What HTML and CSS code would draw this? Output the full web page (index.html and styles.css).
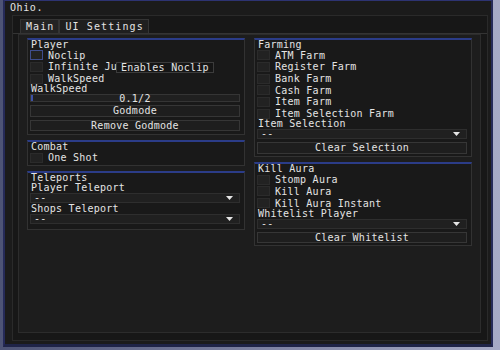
FILE: index.html
```html
<!DOCTYPE html>
<html>
<head>
<meta charset="utf-8">
<link rel="stylesheet" href="styles.css">
</head>
<body>
<div class="window">
  <div class="title">Ohio.</div>
  <div class="frame">
    <div class="tabbar">
      <div class="tab active">Main</div>
      <div class="tab">UI Settings</div>
    </div>
    <div class="content">
      <div class="col">
        <div class="group">
          <div class="hdr">Player</div>
          <div class="check"><span class="box hover"></span>Noclip</div>
          <div class="check"><span class="box"></span>Infinite Jump</div>
          <div class="check"><span class="box"></span>WalkSpeed</div>
          <div class="label">WalkSpeed</div>
          <div class="slider"><span class="grab"></span>0.1/2</div>
          <div class="btn">Godmode</div>
          <div class="btn">Remove Godmode</div>
          <div class="tooltip">Enables Noclip</div>
        </div>
        <div class="group compact">
          <div class="hdr">Combat</div>
          <div class="check"><span class="box"></span>One Shot</div>
        </div>
        <div class="group">
          <div class="hdr">Teleports</div>
          <div class="label">Player Teleport</div>
          <div class="combo"><span>--</span><svg class="arrow" width="7" height="4" viewBox="0 0 7 4"><polygon points="0,0 7,0 3.5,4" fill="#e6e6e6"/></svg></div>
          <div class="label">Shops Teleport</div>
          <div class="combo"><span>--</span><svg class="arrow" width="7" height="4" viewBox="0 0 7 4"><polygon points="0,0 7,0 3.5,4" fill="#e6e6e6"/></svg></div>
        </div>
      </div>
      <div class="col right">
        <div class="group">
          <div class="hdr">Farming</div>
          <div class="check"><span class="box"></span>ATM Farm</div>
          <div class="check"><span class="box"></span>Register Farm</div>
          <div class="check"><span class="box"></span>Bank Farm</div>
          <div class="check"><span class="box"></span>Cash Farm</div>
          <div class="check"><span class="box"></span>Item Farm</div>
          <div class="check"><span class="box"></span>Item Selection Farm</div>
          <div class="label">Item Selection</div>
          <div class="combo"><span>--</span><svg class="arrow" width="7" height="4" viewBox="0 0 7 4"><polygon points="0,0 7,0 3.5,4" fill="#e6e6e6"/></svg></div>
          <div class="btn">Clear Selection</div>
        </div>
        <div class="group">
          <div class="hdr">Kill Aura</div>
          <div class="check"><span class="box"></span>Stomp Aura</div>
          <div class="check"><span class="box"></span>Kill Aura</div>
          <div class="check"><span class="box"></span>Kill Aura Instant</div>
          <div class="label">Whitelist Player</div>
          <div class="combo"><span>--</span><svg class="arrow" width="7" height="4" viewBox="0 0 7 4"><polygon points="0,0 7,0 3.5,4" fill="#e6e6e6"/></svg></div>
          <div class="btn">Clear Whitelist</div>
        </div>
      </div>
    </div>
  </div>
</div>
</body>
</html>
```

FILE: styles.css
```css
* { box-sizing: border-box; }
html, body { margin: 0; padding: 0; }
body {
  width: 500px;
  height: 350px;
  overflow: hidden;
  background: linear-gradient(to right, #4d5375 0%, #7a7f9f 50%, #a6aac6 100%);
  font-family: "DejaVu Sans Mono", "Liberation Mono", monospace;
  font-size: 10px;
  letter-spacing: 0.25px;
  color: #e4e4e4;
}
.window {
  margin-left: 3px;
  width: 490px;
  height: 347px;
  background: #1b1b1b;
  border: 2px solid #252a58;
  border-top: 1px solid #2d3372;
  border-bottom: 3px solid #1f2448;
}
.title {
  height: 14px;
  line-height: 14px;
  padding-left: 5px;
  letter-spacing: 0.6px;
}
.frame {
  margin-left: 7px;
  width: 476px;
  height: 326px;
  border: 1px solid #2a2a2a;
  background: #171717;
}
.tabbar {
  display: flex;
  margin-top: 3px;
  padding-left: 7px;
  height: 15px;
  border-bottom: 1px solid #343434;
}
.tab {
  height: 14px;
  line-height: 13px;
  padding: 0 4px 0 5px;
  border: 1px solid #343434;
  border-bottom: none;
  background: #1f1f1f;
  letter-spacing: 1.1px;
}
.tab.active { background: #232323; }
.content {
  margin-left: 5px;
  width: 463px;
  height: 299px;
  border: 1px solid #2c2c2c;
  background: #1d1d1d;
  padding: 3px 0 0 8px;
  display: grid;
  grid-template-columns: 218px 218px;
  column-gap: 9px;
  align-items: start;
}
.col {
  display: flex;
  flex-direction: column;
  gap: 5px;
}
.col.right { gap: 5.5px; }
.group {
  position: relative;
  border: 1px solid #323232;
  border-top: 2px solid #2b3c88;
  background: #191919;
  padding: 0 4px 3px 2px;
}
.group.compact { padding-bottom: 1.5px; }
.col.right .group { padding-bottom: 2px; }
.hdr {
  height: 9.5px;
  line-height: 10px;
  padding-left: 1px;
}
.check {
  height: 11.66px;
  display: flex;
  align-items: center;
  gap: 5px;
}
.box {
  width: 13px;
  height: 10px;
  background: #222222;
  border: 1px solid #2b2b2b;
  flex: none;
}
.box.hover { border-color: #3e4d8e; }
.label {
  height: 8.5px;
  line-height: 9px;
  padding-left: 1px;
}
.slider {
  position: relative;
  height: 8.5px;
  margin-top: 1px;
  line-height: 7.5px;
  text-align: center;
  border: 1px solid #353535;
  background: #202020;
}
.grab {
  position: absolute;
  left: 0;
  top: 0;
  bottom: 0;
  width: 2px;
  background: #3c50a4;
}
.btn {
  height: 11.5px;
  line-height: 10px;
  margin-top: 3px;
  text-align: center;
  border: 1px solid #363636;
  background: #1e1e1e;
}
.combo {
  height: 10px;
  margin-top: 1.5px;
  margin-bottom: 1.5px;
  display: flex;
  align-items: center;
  justify-content: space-between;
  padding: 0 6px 0 3px;
  border: 1px solid #2e2e2e;
  background: #202020;
  line-height: 8px;
}
.combo + .btn { margin-top: 3px; }
.tooltip {
  position: absolute;
  left: 88px;
  top: 21.5px;
  height: 11.6px;
  line-height: 10px;
  padding: 0 4px 0 4px;
  background: #161616;
  border: 1px solid #3c3c3c;
  white-space: nowrap;
}
```
